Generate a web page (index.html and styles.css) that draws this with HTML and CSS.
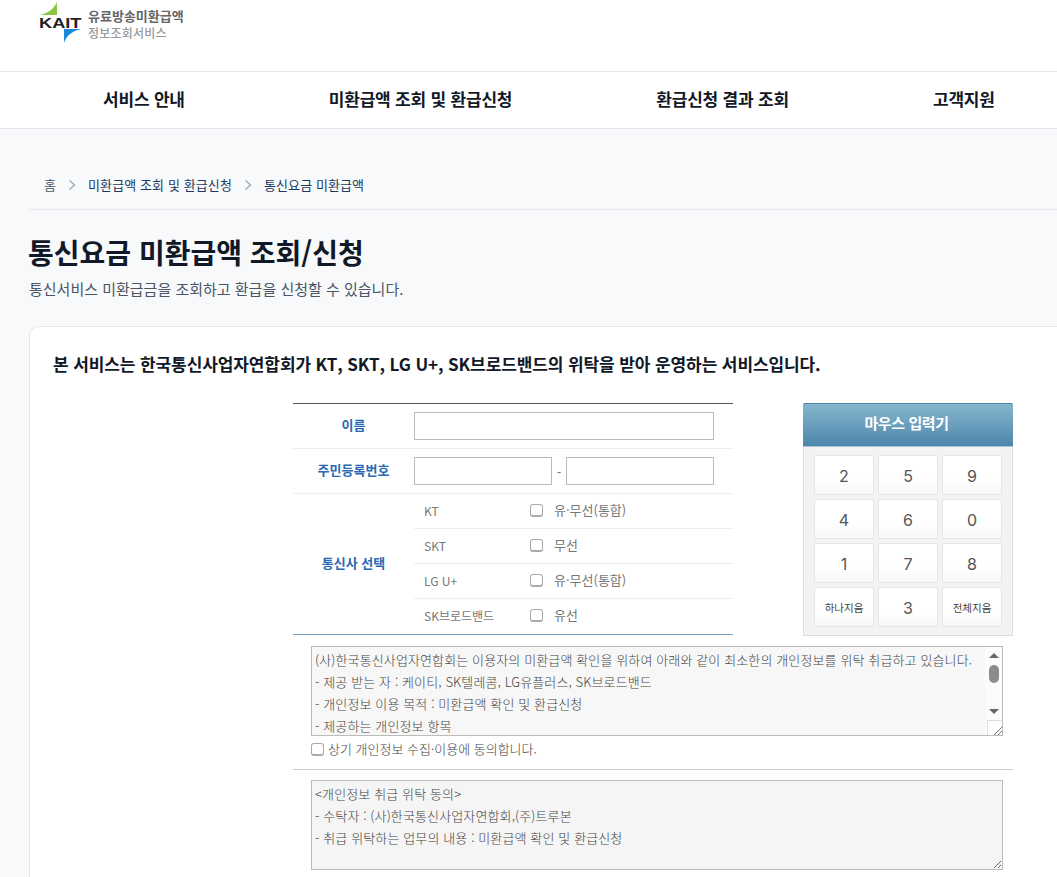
FILE: index.html
```html
<!DOCTYPE html>
<html lang="ko">
<head>
<meta charset="utf-8">
<title>통신요금 미환급액 조회/신청</title>
<link rel="stylesheet" href="styles.css">
</head>
<body>
<header class="top">
  <a class="logo" href="#">
    <span class="logo-mark">
      <svg width="44" height="44" viewBox="0 0 44 44">
        <path d="M0 15 C8 14 15 9 18 2 L18 15 Z" fill="#8cc63f"/>
        <path d="M25 29 L42 29 C33 31 27 36 25 43 Z" fill="#1b87d8"/>
      </svg>
      <span class="logo-kait">KAIT</span>
    </span>
    <span class="logo-text">
      <span class="logo-l1">유료방송미환급액</span>
      <span class="logo-l2">정보조회서비스</span>
    </span>
  </a>
</header>
<nav class="gnb">
  <a href="#">서비스 안내</a>
  <a href="#">미환급액 조회 및 환급신청</a>
  <a href="#">환급신청 결과 조회</a>
  <a href="#">고객지원</a>
</nav>
<main class="wrap">
  <div class="crumbs">
    <span class="crumb-home">홈</span>
    <svg class="chev" width="8" height="12" viewBox="0 0 8 12"><path d="M1.5 1.5 L6.5 6 L1.5 10.5" fill="none" stroke="#9ca3af" stroke-width="1.2"/></svg>
    <a href="#">미환급액 조회 및 환급신청</a>
    <svg class="chev" width="8" height="12" viewBox="0 0 8 12"><path d="M1.5 1.5 L6.5 6 L1.5 10.5" fill="none" stroke="#9ca3af" stroke-width="1.2"/></svg>
    <a href="#">통신요금 미환급액</a>
  </div>
  <h1>통신요금 미환급액 조회/신청</h1>
  <p class="sub">통신서비스 미환급금을 조회하고 환급을 신청할 수 있습니다.</p>
  <section class="card">
    <h2>본 서비스는 한국통신사업자연합회가 KT, SKT, LG U+, SK브로드밴드의 위탁을 받아 운영하는 서비스입니다.</h2>
    <div class="form-area">
      <div class="form-top">
        <div class="fields">
          <div class="row row-input">
            <div class="label">이름</div>
            <div class="val"><input class="inp inp-name" type="text"></div>
          </div>
          <div class="row row-input">
            <div class="label">주민등록번호</div>
            <div class="val"><input class="inp inp-a" type="text"><span class="dash">-</span><input class="inp inp-b" type="text"></div>
          </div>
          <div class="row row-carrier">
            <div class="label">통신사 선택</div>
            <div class="carriers">
              <div class="carrier"><span class="c-name">KT</span><label class="c-opt"><input type="checkbox" class="chk"><span class="c-txt">유·무선(통합)</span></label></div>
              <div class="carrier"><span class="c-name">SKT</span><label class="c-opt"><input type="checkbox" class="chk"><span class="c-txt">무선</span></label></div>
              <div class="carrier"><span class="c-name">LG U+</span><label class="c-opt"><input type="checkbox" class="chk"><span class="c-txt">유·무선(통합)</span></label></div>
              <div class="carrier"><span class="c-name">SK브로드밴드</span><label class="c-opt"><input type="checkbox" class="chk"><span class="c-txt">유선</span></label></div>
            </div>
          </div>
        </div>
        <div class="keypad">
          <div class="kp-head">마우스 입력기</div>
          <div class="kp-grid">
            <button class="key">2</button><button class="key">5</button><button class="key">9</button>
            <button class="key">4</button><button class="key">6</button><button class="key">0</button>
            <button class="key">1</button><button class="key">7</button><button class="key">8</button>
            <button class="key key-sm">하나지움</button><button class="key">3</button><button class="key key-sm">전체지움</button>
          </div>
        </div>
      </div>
      <div class="agree">
        <div class="terms-wrap">
          <textarea class="terms terms-first" readonly>(사)한국통신사업자연합회는 이용자의 미환급액 확인을 위하여 아래와 같이 최소한의 개인정보를 위탁 취급하고 있습니다.
- 제공 받는 자 : 케이티, SK텔레콤, LG유플러스, SK브로드밴드
- 개인정보 이용 목적 : 미환급액 확인 및 환급신청
- 제공하는 개인정보 항목</textarea>
          <div class="sb" aria-hidden="true">
            <div class="sb-track">
              <svg class="sb-arrow" width="10" height="5" viewBox="0 0 10 5"><path d="M0 5 L5 0 L10 5Z" fill="#666"/></svg>
              <div class="sb-thumb"></div>
              <svg class="sb-arrow sb-down" width="10" height="5" viewBox="0 0 10 5"><path d="M0 0 L10 0 L5 5Z" fill="#666"/></svg>
            </div>
            <div class="sb-corner">
              <svg width="15" height="15" viewBox="0 0 15 15"><path d="M14 6 L6 14 M14 10 L10 14" stroke="#777" stroke-width="1" fill="none"/></svg>
            </div>
          </div>
        </div>
        <label class="agree-line"><input type="checkbox" class="chk chk-agree"><span class="agree-txt">상기 개인정보 수집·이용에 동의합니다.</span></label>
      </div>
      <hr class="sep">
      <div class="agree">
        <div class="terms-wrap">
          <textarea class="terms" readonly>&lt;개인정보 취급 위탁 동의&gt;
- 수탁자 : (사)한국통신사업자연합회,(주)트루본
- 취급 위탁하는 업무의 내용 : 미환급액 확인 및 환급신청</textarea>
        </div>
        <div class="agree-line"><input type="checkbox" class="chk chk-agree"></div>
      </div>
    </div>
  </section>
</main>
</body>
</html>
```
FILE: styles.css
```css
* { box-sizing: border-box; }
html { overflow: hidden; }
body {
  margin: 0;
  height: 877px;
  overflow: hidden;
  background: #f8f9fb;
  font-family: "Noto Sans CJK KR", "Noto Sans", sans-serif;
  color: #111827;
}
a { color: inherit; text-decoration: none; }

.top { height: 72px; background: #fff; border-bottom: 1px solid #e5e7eb; padding-left: 39px; }
.logo { display: flex; align-items: flex-start; gap: 5px; }
.logo-mark { position: relative; display: block; width: 44px; height: 44px; flex: none; }
.logo-mark svg { display: block; }
.logo-kait { position: absolute; left: 0; top: 14px; font: 700 14px/18px "Liberation Sans", sans-serif; color: #222; transform: scaleX(1.3); transform-origin: left center; }
.logo-text { display: flex; flex-direction: column; padding-top: 7px; }
.logo-l1 { font-size: 13px; line-height: 18px; font-weight: 700; color: #666; }
.logo-l2 { font-size: 12px; line-height: 15px; font-weight: 500; color: #999; letter-spacing: .2px; }

.gnb { height: 57px; background: #fff; border-bottom: 1px solid #e5e7eb; display: flex; align-items: center; gap: 144px; padding: 0 0 2px 103px; white-space: nowrap; }
.gnb a { font-size: 17px; font-weight: 700; color: #111827; line-height: 24px; letter-spacing: -.2px; }

.wrap { padding: 0 0 0 29px; }
.crumbs { height: 81px; padding: 31px 0 0 15px; border-bottom: 1px solid #e5e7eb; display: flex; align-items: center; gap: 12px; font-size: 13px; letter-spacing: .1px; color: #1e3a5f; }
.crumb-home { color: #4b5563; }
.chev { flex: none; }
h1 { margin: 22px 0 0 -1px; font-size: 28px; line-height: 40px; font-weight: 700; color: #111827; }
.sub { margin: 7px 0 0; font-size: 15px; line-height: 20px; color: #4b5563; }

.card { margin: 27px -30px 0 0; padding: 24px 24px 0 23px; height: 700px; background: #fff; border: 1px solid #e5e7eb; border-radius: 10px; }
.card h2 { margin: 0; font-size: 17px; line-height: 26px; font-weight: 700; color: #111827; white-space: nowrap; letter-spacing: -.1px; }

.form-area { margin: 26px 0 0 240px; width: 720px; }
.form-top { display: flex; justify-content: space-between; align-items: flex-start; }
.fields { width: 440px; border-top: 1px solid #555; border-bottom: 1px solid #7ba3c4; }
.row { display: flex; border-bottom: 1px solid #eee; }
.row-input { height: 45px; }
.row-carrier { border-bottom: 0; }
.label { width: 121px; flex: none; display: flex; align-items: center; justify-content: center; padding-bottom: 4px; font-size: 13px; font-weight: 700; color: #2a68b3; }
.val { display: flex; align-items: center; flex: 1; }
.inp { height: 28px; border: 1px solid #bbb; background: #fff; padding: 0 4px; outline: 0; }
.inp-name { width: 300px; }
.inp-a { width: 138px; }
.inp-b { width: 148px; }
.dash { width: 14px; text-align: center; font-size: 12px; color: #666; }
.carriers { flex: 1; }
.carrier { height: 35px; display: flex; align-items: center; padding-left: 10px; border-bottom: 1px solid #eee; font-size: 12px; color: #777; }
.carrier:last-child { border-bottom: 0; }
.c-name { width: 106px; flex: none; padding-bottom: 2px; }
.c-opt { display: flex; align-items: center; gap: 11px; padding-bottom: 2px; font-size: 13px; color: #777; }
.c-txt { padding-bottom: 2px; }
.chk { appearance: none; margin: 0; width: 13px; height: 13px; border: 1px solid #aaa; border-bottom-width: 2px; border-radius: 3px; background: #fff; flex: none; }

.keypad { width: 210px; height: 233px; background: #f3f3f3; border: 1px solid #ddd; border-top: 0; border-radius: 2px 2px 0 0; }
.kp-head { height: 44px; margin: 0 -1px; background: linear-gradient(#86b6cd, #4d86ab); border-top: 1px solid #4a87ad; border-bottom: 1px solid #a9c6d8; border-radius: 2px 2px 0 0; color: #fff; font-size: 15px; letter-spacing: -.4px; font-weight: 700; display: flex; align-items: center; justify-content: center; padding: 0 3px 5px 0; }
.kp-grid { display: grid; grid-template-columns: repeat(3, 60px); grid-auto-rows: 40px; gap: 4px; padding: 8px 0 0 10px; }
.key { border: 1px solid #e6e6e6; border-radius: 2px; background: linear-gradient(#fff 60%, #f8f8f8); padding: 2px 0 0; font: 400 16px "Inter", sans-serif; color: #555; }
.key-sm { padding: 0; font: 400 10.5px "Noto Sans CJK KR", sans-serif; color: #444; }

.agree { padding-left: 18px; }
.terms-wrap { position: relative; width: 692px; margin-top: 10px; }
.terms { display: block; width: 692px; height: 90px; padding: 2px 3px; border: 1px solid #bbb; background: #f5f5f5; font: 300 13px/22px "Noto Sans CJK KR", sans-serif; letter-spacing: .12px; color: #444; resize: both; outline: 0; white-space: pre-wrap; overflow: hidden; }
.terms-first { resize: none; background: #f7f7f7; }
.sb { position: absolute; top: 1px; right: 1px; bottom: 1px; width: 17px; display: flex; flex-direction: column; align-items: flex-end; background: #fbfbfb; }
.sb-track { flex: 1; width: 17px; display: flex; flex-direction: column; align-items: center; padding: 6px 0 0; }
.sb-thumb { width: 10px; height: 18px; margin-top: 7px; background: #8c8c8c; border-radius: 5px; }
.sb-down { margin-top: 26px; }
.sb-arrow { flex: none; display: block; }
.sb-corner { width: 15px; height: 15px; flex: none; background: #fff; border-left: 1px solid #ddd; border-top: 1px solid #ddd; }
.sb-corner svg { display: block; }
.agree-line { display: flex; align-items: center; gap: 4px; height: 24px; margin-top: 1px; font-size: 13px; color: #444; }
.agree-txt { font-weight: 300; padding-bottom: 2px; }
.chk-agree { width: 13px; height: 13px; }
.sep { margin: 8px 0 0; border: 0; border-top: 1px solid #ccc; }
```
